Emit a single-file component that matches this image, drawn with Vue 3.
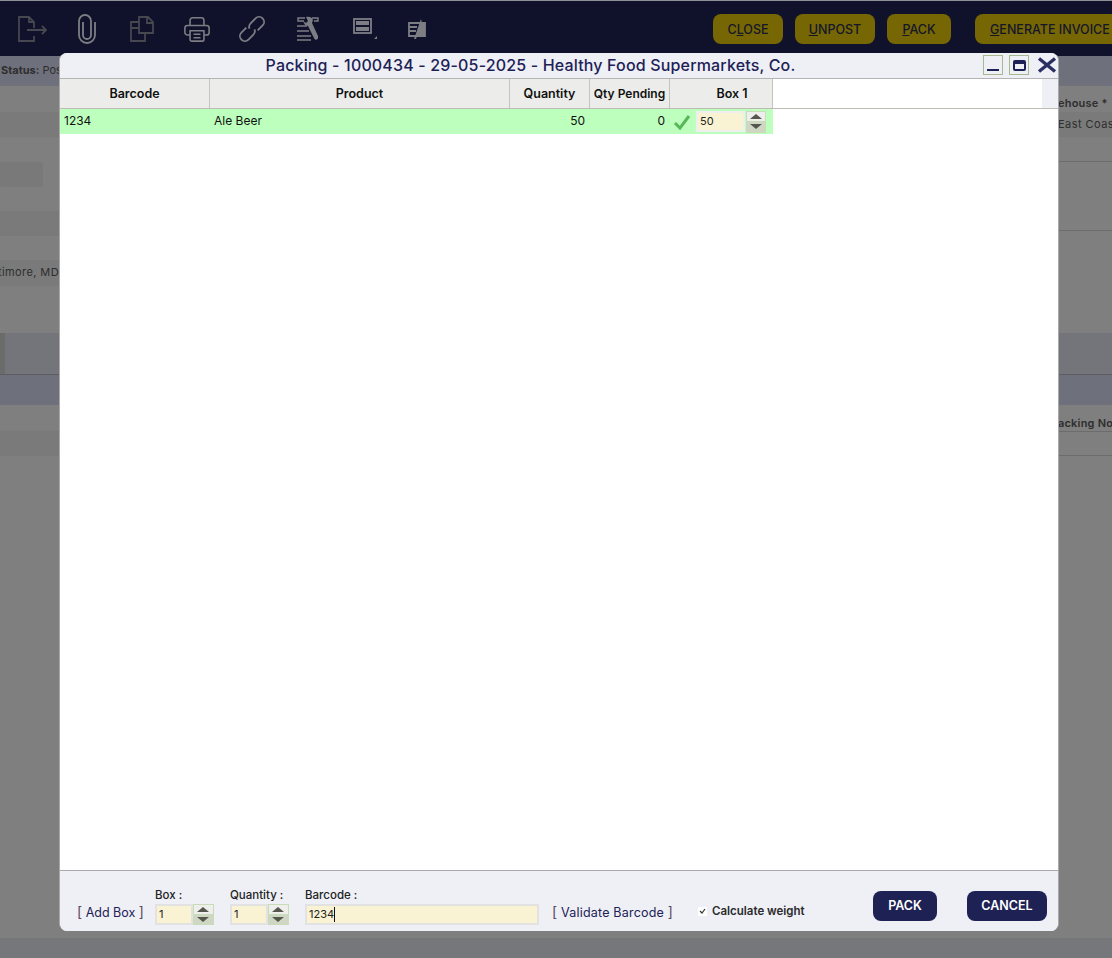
<template>
  <div class="page">
    <header class="topbar">
      <div class="tools">
        <svg class="tool dim" width="40" height="30" viewBox="0 0 40 30"><path d="M22 22v5H7V3h10l5 5v6M17 3v5h5M15 16h19M30 12l4 4-4 4" /></svg>
        <svg class="tool" width="24" height="30" viewBox="0 0 24 30"><path d="M8 8v13a4 4 0 0 0 8 0V7a6 6 0 0 0-12 0v14a8 8 0 0 0 16 0V8" /></svg>
        <svg class="tool dim" width="28" height="30" viewBox="0 0 28 30"><path d="M10 8H2v19h14v-8M10 3h9l5 5v11H10zM18 3v6h6M2 14h8" /></svg>
        <svg class="tool" width="26" height="26" viewBox="0 0 30 30"><path d="M7 11V5a3 3 0 0 1 3-3h10a3 3 0 0 1 3 3v6M7 22H4a3 3 0 0 1-3-3v-5a3 3 0 0 1 3-3h22a3 3 0 0 1 3 3v5a3 3 0 0 1-3 3h-3M7 17h16v10a2 2 0 0 1-2 2H9a2 2 0 0 1-2-2zM11 21h8M11 25h8" /></svg>
        <svg class="tool" width="30" height="30" viewBox="0 0 30 30"><g transform="rotate(-45 15 15)"><path d="M12 10H5a5 5 0 0 0 0 10h7a5 5 0 0 0 4.5-3" /><path d="M18 20h7a5 5 0 0 0 0-10h-7a5 5 0 0 0-4.5 3" /></g></svg>
        <svg class="tool wrench" width="24" height="26" viewBox="0 0 24 26"><path d="M9 2H2v3h6M1 10h10M1 15h12M1 20h14M1 24h14M16 2h6v3h-4" /><path class="fill" d="M10 1c3-1 6 0 7 3l-1 3 6 13c1 4-3 5-4 2L12 10 9 9 7 5l3 2 2-2z" /></svg>
        <svg class="tool layout" width="24" height="22" viewBox="0 0 24 22"><rect x="1" y="1" width="17" height="14" /><path class="fill" d="M3 3h13v4H3zM3 9h13v4H3z" /><path class="fill" d="M24 18v3h-3z" /></svg>
        <svg class="tool stack" width="20" height="22" viewBox="0 0 20 22"><path d="M2 5h16v13H2zM2 9h8M2 13h7" /><path class="fill" d="M14 1L7 21h2l1-3h8V5h-3z" /></svg>
      </div>
      <div class="actions">
        <button class="act w70"><span>C<u>L</u>OSE</span></button>
        <button class="act w80"><span><u>U</u>NPOST</span></button>
        <button class="act w64"><span><u>P</u>ACK</span></button>
        <button class="act gen"><span><u>G</u>ENERATE INVOICE</span></button>
      </div>
    </header>

    <div class="backdrop">
      <div class="cols">
        <div class="col left">
          <div class="status"><b>Status:</b> Posted</div>
          <div class="blank h26"></div>
          <div class="band"></div>
          <div class="blank h25"></div>
          <div class="chip"></div>
          <div class="blank h24"></div>
          <div class="band"></div>
          <div class="blank h24"></div>
          <div class="band addr">Baltimore, MD</div>
          <div class="blank h47"></div>
          <div class="tabs"><i class="tab"></i></div>
          <div class="tab-head"></div>
          <div class="blank h26"></div>
          <div class="band"></div>
        </div>
        <div class="col right">
          <div class="status"></div>
          <div class="lbl first">ehouse *</div>
          <div class="band val">East Coast</div>
          <div class="blank h25 rule"></div>
          <div class="blank h69 rule"></div>
          <div class="blank h102"></div>
          <div class="tabs"></div>
          <div class="tab-head"></div>
          <div class="lbl">acking No</div>
          <div class="blank h24 rule top"></div>
          <div class="rule-end"></div>
        </div>
      </div>
      <div class="foot"></div>
    </div>

    <div class="modal">
      <div class="titlebar">
        <div class="title">Packing - 1000434 - 29-05-2025 - Healthy Food Supermarkets, Co.</div>
        <div class="winbtns">
          <span class="winbtn"><i class="min"></i></span>
          <span class="winbtn"><i class="max"></i></span>
          <svg class="x" width="22" height="16" viewBox="0 0 22 16"><path d="M3 1.5l16 13M19 1.5l-16 13" /></svg>
        </div>
      </div>

      <div class="grid-wrap">
        <div class="thead">
          <div v-for="c in columns" :key="c.name" class="th" :class="c.cls" :style="{ width: c.w + 'px' }">{{ c.name }}</div>
          <div class="th-rest"></div>
          <div class="gutter"></div>
        </div>
        <div class="tr">
          <div class="td" style="width: 150px">1234</div>
          <div class="td" style="width: 300px">Ale Beer</div>
          <div class="td num" style="width: 80px">50</div>
          <div class="td num" style="width: 80px">0</div>
          <div class="td box" style="width: 103px">
            <svg class="tick" width="18" height="16" viewBox="0 0 18 16"><path d="M2 9l5 5L16 2" /></svg>
            <div class="field cell">50</div>
            <div class="spin"><span class="up"></span><span class="down"></span></div>
          </div>
        </div>
      </div>

      <div class="footer">
        <a class="link add"><em>[</em> Add Box <em>]</em></a>
        <div class="group">
          <label>Box :</label>
          <div class="with-spin">
            <div class="field small">1</div>
            <div class="spin"><span class="up"></span><span class="down"></span></div>
          </div>
        </div>
        <div class="group">
          <label>Quantity :</label>
          <div class="with-spin">
            <div class="field small">1</div>
            <div class="spin"><span class="up"></span><span class="down"></span></div>
          </div>
        </div>
        <div class="group">
          <label>Barcode :</label>
          <div class="field wide">1234<i class="caret"></i></div>
        </div>
        <a class="link validate"><em>[</em> Validate Barcode <em>]</em></a>
        <div class="check">
          <span class="box-check"><svg width="7" height="6" viewBox="0 0 7 6"><path d="M1 3l2 2 3-4" /></svg></span>
          <span>Calculate weight</span>
        </div>
        <button class="primary pack">PACK</button>
        <button class="primary cancel">CANCEL</button>
      </div>
    </div>
  </div>
</template>

<script setup>
const columns = [
  { name: 'Barcode', w: 150 },
  { name: 'Product', w: 300 },
  { name: 'Quantity', w: 80 },
  { name: 'Qty Pending', w: 80 },
  { name: 'Box 1', w: 103, cls: 'box-head' },
];
</script>

<style>
html, body {
  margin: 0;
  background: #808080;
}
</style>

<style scoped>
.page {
  position: relative;
  width: 1112px;
  height: 958px;
  overflow: hidden;
  font-family: Inter, "Open Sans", sans-serif;
  font-size: 12px;
  color: #111;
}

/* top bar */
.topbar {
  box-sizing: border-box;
  height: 56px;
  border-top: 1px solid #8f9096;
  background: #0f122a;
  display: flex;
  align-items: flex-start;
  overflow: hidden;
}
.tools {
  display: flex;
  flex: none;
  align-items: center;
  width: 713px;
  height: 55px;
  padding-left: 12px;
  box-sizing: border-box;
}
.tool {
  fill: none;
  stroke: #7d7e84;
  stroke-width: 1.8;
  flex: none;
}
.tool.dim { stroke: #46474f; }
.tool:nth-child(1) { margin-right: 23px; }
.tool:nth-child(2) { margin-right: 30px; }
.tool:nth-child(3) { margin-right: 27px; }
.tool:nth-child(4) { margin-right: 27px; }
.tool:nth-child(5) { margin-right: 29px; }
.tool:nth-child(6) { margin-right: 33px; }
.tool:nth-child(7) { margin-right: 30px; }
.tool .fill { fill: #7d7e84; stroke: none; }
.wrench { stroke-width: 1.4; }
.actions {
  display: flex;
  padding-top: 13px;
  flex: none;
}
.act {
  height: 30px;
  margin-right: 12px;
  padding: 0;
  border: 0;
  border-radius: 8px;
  background: #766604;
  color: #14162a;
  font: 500 12.5px Inter, sans-serif;
  white-space: nowrap;
}
.w70 { width: 70px; }
.w80 { width: 80px; }
.w64 { width: 64px; }
.act.gen { margin-left: 12px; margin-right: 0; padding: 0 15px; }

/* dimmed page behind the dialog */
.backdrop {
  height: 902px;
  display: flex;
  flex-direction: column;
  background: #7f7f7f;
  color: #2e2e2e;
  font-size: 11px;
}
.cols {
  flex: 1;
  display: flex;
  justify-content: space-between;
}
.col {
  overflow: hidden;
  white-space: nowrap;
}
.left { width: 59px; }
.right { width: 54px; }
.status {
  box-sizing: border-box;
  height: 30px;
  padding: 7px 1px;
  background: #6e707b;
}
.blank { box-sizing: border-box; }
.h24 { height: 24px; }
.h25 { height: 25px; }
.h26 { height: 26px; }
.h47 { height: 47px; }
.h69 { height: 69px; }
.h102 { height: 102px; }
.rule { border-bottom: 1px solid #6c6c6c; }
.rule.top { border-bottom: 0; border-top: 1px solid #6c6c6c; }
.rule-end { height: 1px; background: #6c6c6c; }
.band {
  height: 25px;
  line-height: 25px;
  background: #7a7a7a;
}
.addr {
  height: 26px;
  direction: rtl;
  letter-spacing: .4px;
}
.chip {
  width: 43px;
  height: 25px;
  border-radius: 3px;
  background: #797979;
}
.lbl {
  box-sizing: border-box;
  height: 26px;
  padding-top: 11px;
  font-weight: 600;
  letter-spacing: .2px;
}
.lbl.first { padding-top: 10px; }
.val { letter-spacing: .45px; }
.tabs {
  box-sizing: border-box;
  height: 42px;
  background: #73757a;
  border-bottom: 1px solid #5c5d62;
}
.tab {
  display: block;
  width: 5px;
  height: 41px;
  background: #6b6b6b;
}
.tab-head {
  height: 30px;
  background: #6e707b;
}
.foot { height: 20px; background: #76777b; }

/* dialog */
.modal {
  position: absolute;
  left: 59px;
  top: 53px;
  box-sizing: border-box;
  width: 1000px;
  height: 878px;
  display: flex;
  flex-direction: column;
  border-left: 1px solid #a9a9a9;
  border-right: 1px solid #a9a9a9;
  border-radius: 8px;
  background: #fff;
  overflow: hidden;
}
.titlebar {
  position: relative;
  flex: none;
  height: 25px;
  padding-right: 57px;
  background: #eef0f6;
  border-bottom: 1px solid #b4b4b4;
  text-align: center;
}
.title {
  font-size: 16px;
  font-weight: 500;
  line-height: 25px;
  letter-spacing: .16px;
  color: #1d2155;
}
.winbtns {
  position: absolute;
  right: 0;
  top: 2px;
  display: flex;
  align-items: center;
}
.winbtn {
  box-sizing: border-box;
  width: 20px;
  height: 20px;
  margin-right: 6px;
  border: 1px solid #a5bb8f;
  display: flex;
  align-items: center;
  justify-content: center;
}
.winbtn + .x { margin-left: 1px; }
.min {
  width: 12px;
  height: 2px;
  margin-top: 10px;
  background: #1d2155;
}
.max {
  box-sizing: border-box;
  width: 13px;
  height: 11px;
  border: 2px solid #1d2155;
  border-top-width: 4px;
  border-radius: 2px;
}
.x {
  fill: none;
  stroke: #2a2e63;
  stroke-width: 3.4;
}
.grid-wrap {
  flex: 1;
  background: #fff;
}
.thead {
  display: flex;
  height: 30px;
  box-sizing: border-box;
  border-bottom: 1px solid #bcbcb4;
}
.th {
  box-sizing: border-box;
  background: #ecedea;
  border-right: 1px solid #c4c4be;
  font-weight: 600;
  font-size: 12.5px;
  line-height: 29px;
  text-align: center;
  color: #111;
  white-space: nowrap;
}
.th:nth-child(4) { font-size: 12px; }
.box-head { padding-left: 22px; }
.th-rest { flex: 1; background: #fff; }
.gutter { width: 16px; background: #eef0f6; }
.tr { display: flex; }
.td {
  box-sizing: border-box;
  height: 25px;
  padding: 0 4px;
  background: #bdffbd;
  line-height: 24px;
  white-space: nowrap;
}
.num { text-align: right; padding-right: 5px; }
.box {
  display: flex;
  align-items: center;
  padding: 0;
}
.tick {
  margin: 0 5px 0 3px;
  flex: none;
  fill: none;
  stroke: #58b858;
  stroke-width: 3;
}
.field {
  box-sizing: border-box;
  border: 2px solid #e2e2e2;
  background: #faf3d3;
  color: #222;
  font-size: 11px;
  white-space: nowrap;
}
.cell {
  width: 49px;
  height: 21px;
  margin-right: 1px;
  padding-left: 2px;
  line-height: 17px;
  border-color: #eee;
}
.spin {
  box-sizing: border-box;
  width: 21px;
  height: 21px;
  flex: none;
  display: flex;
  flex-direction: column;
  border: 1px solid #c9dcb8;
  background: #c9dcb8;
  gap: 1px;
}
.cell + .spin { width: 20px; height: 22px; }
.spin span {
  flex: 1;
  position: relative;
}
.up { background: #eeeeec; }
.down { background: #d0d6c4; }
.up::after,
.down::after {
  content: "";
  position: absolute;
  left: 3px;
  width: 0;
  height: 0;
  border-left: 6px solid transparent;
  border-right: 6px solid transparent;
}
.up::after { top: 2px; border-bottom: 5px solid #55574e; }
.down::after { top: 2px; border-top: 5px solid #55574e; }

.footer {
  flex: none;
  box-sizing: border-box;
  height: 61px;
  border-top: 1px solid #a9a9a9;
  background: #eef0f6;
  display: flex;
  align-items: flex-end;
  padding: 0 0 6px 17px;
}
.link {
  color: #1d2155;
  font-size: 12.5px;
  line-height: 18px;
  white-space: nowrap;
}
.link em { font-style: normal; color: #5a4a58; font-size: 14px; }
.add { width: 78px; padding-bottom: 3px; }
.group { margin-right: 16px; }
.group label {
  display: block;
  height: 16px;
  line-height: 15px;
  font-size: 11.5px;
  font-weight: 500;
  color: #222;
  white-space: nowrap;
}
.with-spin { display: flex; }
.small {
  width: 38px;
  height: 21px;
  padding-left: 2px;
  line-height: 17px;
}
.wide {
  width: 234px;
  height: 21px;
  padding-left: 2px;
  line-height: 17px;
  display: flex;
  align-items: center;
}
.caret {
  width: 1px;
  height: 15px;
  background: #111;
}
.validate { margin-left: -3px; width: 146px; padding-bottom: 3px; letter-spacing: .2px; }
.check {
  display: flex;
  align-items: center;
  width: 175px;
  gap: 5px;
  padding-bottom: 7px;
  font-size: 11.5px;
  font-weight: 600;
  color: #2a2a2a;
  white-space: nowrap;
}
.box-check {
  width: 9px;
  height: 9px;
  background: #fff;
  display: flex;
  align-items: center;
  justify-content: center;
}
.box-check svg { fill: none; stroke: #333; stroke-width: 1.2; }
.primary {
  height: 30px;
  margin-bottom: 4px;
  padding: 0 0 2px;
  border: 0;
  border-radius: 8px;
  background: #1e2154;
  color: #fff;
  font: 600 12.5px Inter, sans-serif;
}
.pack { width: 64px; }
.cancel { width: 80px; margin-left: 30px; }
</style>
